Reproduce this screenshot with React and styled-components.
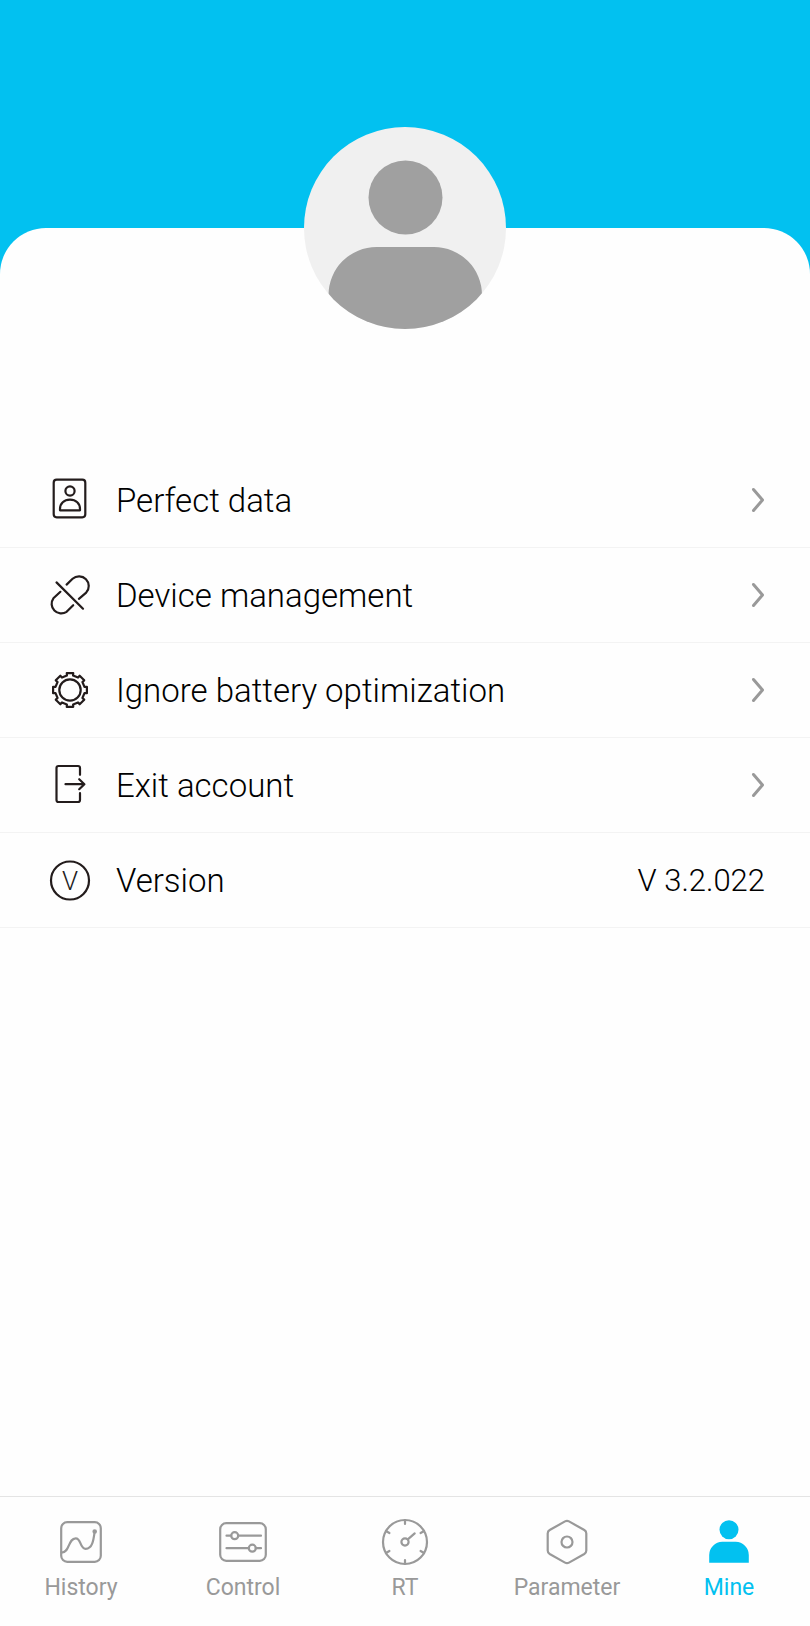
import React from 'react';
import styled, { createGlobalStyle } from 'styled-components';

const GlobalStyle = createGlobalStyle`
  * {
    box-sizing: border-box;
  }
  body {
    margin: 0;
    background: #fefefe;
    font-family: Roboto, "Noto Sans", sans-serif;
  }
`

const IconLetter = styled.text`
  fill: #231c1c;
  stroke: none;
  font-size: 26px;
`

// outline of the cog, teeth spread evenly round the centre
function cogPath(cx, cy, teeth, outer, inner) {
  const step = (Math.PI * 2) / teeth;
  const points = [];
  for (let i = 0; i < teeth; i++) {
    const mid = i * step - Math.PI / 2;
    [[-0.27, inner], [-0.24, outer], [0.24, outer], [0.27, inner]].forEach(([t, r]) => {
      const a = mid + t * step;
      points.push(`${(cx + r * Math.cos(a)).toFixed(2)} ${(cy + r * Math.sin(a)).toFixed(2)}`);
    });
  }
  return `M${points.join('L')}Z`;
}

const icons = {
  profile: (
    <>
      <rect x="5.7" y="1.7" width="31.6" height="37.6" rx="3" />
      <circle cx="22" cy="13" r="4.6" />
      <path d="M12 32.3V31C12 25.4 16 21.6 22 21.6S32 25.4 32 31V32.3Z" />
    </>
  ),
  unlink: (
    <>
      <path d="M8.5 9.4L35 35.7" />
      <path d="M18.6 11.6L24.6 5.8A9.7 9.7 0 0 1 38.2 19.6L30.9 25.8" />
      <path d="M12.4 18.8L5.4 25.3A9.6 9.6 0 0 0 18.6 38.8L25.2 32.2" />
    </>
  ),
  cog: (
    <>
      <path d={cogPath(22, 22, 8, 17.2, 14.8)} />
      <circle cx="22" cy="22" r="10.7" />
    </>
  ),
  exit: (
    <>
      <path d="M32 11.8V5Q32 3 30 3H10.5Q8.5 3 8.5 5V37Q8.5 39 10.5 39H30Q32 39 32 37V30.2" />
      <path d="M17.5 21.2H36.2M31.2 16.2L36.4 21.2L31.2 26.2" />
    </>
  ),
  version: (
    <>
      <circle cx="22" cy="22.5" r="19" />
      <IconLetter x="22" y="32" textAnchor="middle">V</IconLetter>
    </>
  ),
  history: (
    <>
      <rect x="4.2" y="4.2" width="39.6" height="39.6" rx="6" />
      <path d="M4.5 34.6C13 34.6 11 20.3 18.7 20.3C24.5 20.3 22.5 30.8 28.7 30.8C35.5 30.8 36.5 22 37.7 13.5" />
      <circle cx="37.7" cy="13.5" r="1.2" />
    </>
  ),
  control: (
    <>
      <rect x="1.2" y="5.2" width="45.6" height="37.6" rx="6" />
      <path d="M7.5 17.7H12.2M19.2 17.7H42M7.5 30.2H29.8M36.8 30.2H42" />
      <circle cx="15.7" cy="17.7" r="3.5" />
      <circle cx="33.3" cy="30.2" r="3.5" />
    </>
  ),
  gauge: (
    <>
      <circle cx="24" cy="24" r="22" />
      <path d="M24 2V6M24 42V46M4.9 13L8.4 15M39.6 33L43.1 35M4.9 35L8.4 33M39.6 15L43.1 13" />
      <circle cx="24" cy="24" r="3.6" />
      <path d="M26.8 21.4L33.7 15.4" />
    </>
  ),
  parameter: (
    <>
      <path d="M22 3.4Q24 2.3 26 3.4L41.3 12Q43.3 13.2 43.3 15.5V32.5Q43.3 34.8 41.3 36L26 44.6Q24 45.7 22 44.6L6.7 36Q4.7 34.8 4.7 32.5V15.5Q4.7 13.2 6.7 12Z" />
      <circle cx="24" cy="24" r="5.5" />
    </>
  ),
  mine: (
    <>
      <circle cx="24" cy="11.7" r="9.5" fill="currentColor" stroke="none" />
      <path d="M4.2 44.7V37A13.2 13.2 0 0 1 17.4 23.8H30.6A13.2 13.2 0 0 1 43.8 37V44.7Z" fill="currentColor" stroke="none" />
    </>
  ),
};

const rows = [
  { icon: 'profile', label: 'Perfect data' },
  { icon: 'unlink', label: 'Device management' },
  { icon: 'cog', label: 'Ignore battery optimization' },
  { icon: 'exit', label: 'Exit account' },
  { icon: 'version', label: 'Version', value: 'V 3.2.022' },
];

const tabs = [
  { icon: 'history', label: 'History' },
  { icon: 'control', label: 'Control' },
  { icon: 'gauge', label: 'RT' },
  { icon: 'parameter', label: 'Parameter' },
  { icon: 'mine', label: 'Mine', active: true },
];

export default function App() {
  return (
    <Page>
      <GlobalStyle />
      <Banner />
      <Sheet>
        <Avatar viewBox="0 0 202 202" role="img" aria-label="Profile picture">
          <clipPath id="avatar-clip">
            <circle cx="101" cy="101" r="101" />
          </clipPath>
          <g clipPath="url(#avatar-clip)">
            <rect width="202" height="202" fill="#f0f0f0" />
            <circle cx="101.5" cy="70.5" r="37" fill="#a0a0a0" />
            <path d="M24.5 202V168A48 48 0 0 1 72.5 120H130A48 48 0 0 1 178 168V202Z" fill="#a0a0a0" />
          </g>
        </Avatar>
        <Menu>
          {rows.map((row) => (
            <MenuItem key={row.label}>
              <Row as={row.value ? 'div' : 'button'}>
                <RowIcon viewBox="0 0 44 44" aria-hidden="true">{icons[row.icon]}</RowIcon>
                <RowLabel>{row.label}</RowLabel>
                {row.value
                  ? <RowValue>{row.value}</RowValue>
                  : (
                    <Chevron viewBox="0 0 14 26" aria-hidden="true">
                      <path d="M2.5 2.5L11.5 13L2.5 23.5" />
                    </Chevron>
                  )}
              </Row>
            </MenuItem>
          ))}
        </Menu>
      </Sheet>
      <TabBar>
        {tabs.map((tab) => (
          <Tab key={tab.label} href="#" $active={tab.active} aria-current={tab.active ? 'page' : undefined}>
            <TabIcon viewBox="0 0 48 48" aria-hidden="true">{icons[tab.icon]}</TabIcon>
            {tab.label}
          </Tab>
        ))}
      </TabBar>
    </Page>
  );
}

const Page = styled.div`
  min-height: 100vh;
  display: flex;
  flex-direction: column;
  background: #fefefe;
`
const Banner = styled.header`
  height: 276px;
  background: #02c1f0;
`
const Sheet = styled.main`
  flex: 1;
  display: flex;
  flex-direction: column;
  align-items: center;
  margin-top: -48px;
  border-radius: 46px 46px 0 0;
  background: #fefefe;
`
const Avatar = styled.svg`
  width: 202px;
  height: 202px;
  margin-top: -101px;
`
const Menu = styled.ul`
  width: 100%;
  margin: 124px 0 0;
  padding: 0;
  list-style: none;
`
const MenuItem = styled.li`
  border-bottom: 1px solid #f3f3f3;
`
const Row = styled.button`
  width: 100%;
  height: 94px;
  display: flex;
  align-items: center;
  padding: 0 45px 0 48px;
  border: 0;
  background: none;
  color: #000;
  font-family: inherit;
  font-size: 33px;
  font-weight: 300;
  line-height: 44px;
  text-align: left;
`
const RowIcon = styled.svg`
  width: 44px;
  height: 44px;
  flex: none;
  fill: none;
  stroke: #231c1c;
  stroke-width: 2.2;
  stroke-linecap: round;
  stroke-linejoin: round;
`
const RowLabel = styled.span`
  flex: 1;
  padding: 2px 0 0 24px;
`
const RowValue = styled.span`
  padding-top: 2px;
  font-size: 31px;
`
const Chevron = styled.svg`
  width: 14px;
  height: 26px;
  fill: none;
  stroke: #999;
  stroke-width: 3;
  stroke-linecap: round;
  stroke-linejoin: round;
`
const TabBar = styled.nav`
  display: flex;
  padding: 21px 0 22px;
  border-top: 1px solid #e4e4e4;
`
const Tab = styled.a`
  flex: 1 1 0;
  min-width: 0;
  display: flex;
  flex-direction: column;
  align-items: center;
  gap: 6px;
  color: ${(props) => (props.$active ? '#02c1f0' : '#999')};
  font-size: 23px;
  line-height: 32px;
  text-decoration: none;
`
const TabIcon = styled.svg`
  width: 48px;
  height: 48px;
  fill: none;
  stroke: currentColor;
  stroke-width: 2.2;
  stroke-linecap: round;
  stroke-linejoin: round;
`
